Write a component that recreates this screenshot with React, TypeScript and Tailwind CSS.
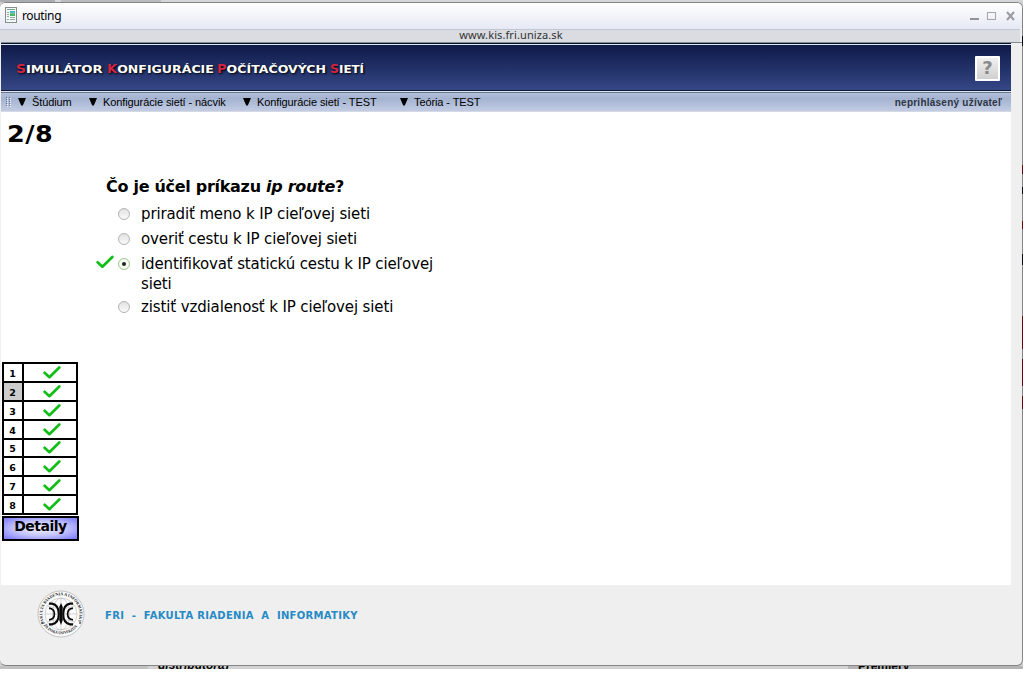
const menu = [
  { label: 'Štúdium', cls: 'w-[71px]' },
  { label: 'Konfigurácie sietí - nácvik', cls: 'w-[154px]' },
  { label: 'Konfigurácie sietí - TEST', cls: 'w-[157px]' },
  { label: 'Teória - TEST', cls: 'w-[100px]' },
];

const titleWords = [
  { first: 'S', rest: 'IMULÁTOR', cls: 'w-[91px]', stretch: 'scale-x-[1.2]' },
  { first: 'K', rest: 'ONFIGURÁCIE', cls: 'w-[110px]', stretch: 'scale-x-[1.14]' },
  { first: 'P', rest: 'OČÍTAČOVÝCH', cls: 'w-[113px]', stretch: 'scale-x-[1.14]' },
  { first: 'S', rest: 'IETÍ', cls: 'w-[40px]', stretch: 'scale-x-[1.08]' },
];

const answers = [
  { text: 'priradiť meno k IP cieľovej sieti', cls: 'h-[25px]', chosen: false },
  { text: 'overiť cestu k IP cieľovej sieti', cls: 'h-[25px]', chosen: false },
  { text: 'identifikovať statickú cestu k IP cieľovej sieti', cls: 'h-[43px]', chosen: true },
  { text: 'zistiť vzdialenosť k IP cieľovej sieti', cls: 'h-[25px]', chosen: false },
];

const rows = [
  'h-[17px] mb-[2px]', 'h-[17px] mb-[2px]', 'h-[17px] mb-[2px]', 'h-[17px] mb-[2px]',
  'h-[16px] mb-[2px]', 'h-[17px] mb-[2px]', 'h-[17px] mb-[2px]', 'h-[17px]',
];

function Check({ className }: { className: string }) {
  return (
    <svg className={className} viewBox="0 0 18 13" fill="none">
      <path d="M1.6 6.8 L6.4 11.2 L16.3 1.5" stroke="#11bd16" strokeWidth="2.7" strokeLinecap="round" strokeLinejoin="round" />
    </svg>
  );
}

function Radio({ on }: { on: boolean }) {
  return (
    <span className={`mt-[4px] flex h-[12px] w-[12px] shrink-0 items-center justify-center rounded-full border ${on ? 'border-[#9ccb8e] bg-[#f5fbf2]' : 'border-[#b3b3b3] bg-gradient-to-b from-[#e2e2e2] to-[#fafafa]'}`}>
      {on && <span className="h-[4px] w-[4px] rounded-full bg-[#202820]" />}
    </span>
  );
}

function Seal() {
  return (
    <svg className="h-[48px] w-[48px]" viewBox="0 0 48 48">
      <defs>
        <path id="sealTop" d="M7.9 33.3 A18.6 18.6 0 1 1 40.1 33.3" />
        <path id="sealBottom" d="M6.5 35.2 A21.6 21.6 0 0 0 41.5 35.2" />
      </defs>
      <circle cx="24" cy="24" r="23" fill="#fbfbfb" stroke="#a0a0a0" strokeWidth=".6" />
      <g fill="none" stroke="#b9b9b9" strokeWidth=".6">
        <circle cx="24" cy="24" r="16" />
        <ellipse cx="24" cy="24" rx="8.5" ry="16" />
        <path d="M8.3 24H39.7M10.5 16Q24 21 37.5 16M10.5 32Q24 27 37.5 32M24 8V40" />
      </g>
      <g fontFamily="Liberation Serif, serif" fontWeight="700" fontSize="4.2" fill="#222">
        <text><textPath href="#sealTop" textLength="76" lengthAdjust="spacingAndGlyphs">FAKULTA RIADENIA A INFORMATIKY</textPath></text>
        <text><textPath href="#sealBottom" textLength="39" lengthAdjust="spacingAndGlyphs">ŽILINSKÁ UNIVERZITA</textPath></text>
      </g>
      <circle cx="5" cy="33" r=".8" />
      <circle cx="43" cy="33" r=".8" />
      <g fill="none" stroke="#0a0a0a">
        <path d="M12 13.6H15Q21.8 15 21.8 24T15 34.4H12M36 13.6H33Q26.2 15 26.2 24T33 34.4H36" strokeWidth="2.1" />
        <path d="M12 18.2Q17.4 18.7 17.4 24T12 29.8M36 18.2Q30.6 18.7 30.6 24T36 29.8" strokeWidth="1.7" />
      </g>
      <path d="M24 13L25.8 17L25.3 23L25.8 30L24 35L22.2 30L22.7 23L22.2 17Z" fill="#0a0a0a" />
    </svg>
  );
}

export default function App() {
  return (
    <div className="relative h-[678px] w-[1028px] overflow-hidden bg-white font-['DejaVu_Sans',sans-serif] text-black">
      <div className="flex h-[669px] w-[1023px] flex-col bg-[#cfcfcf]">
        <div className="flex h-[2px] shrink-0 bg-[#d4d7da]">
          <div className="w-[55px] bg-[#a9acb0]" />
          <div className="ml-[6px] w-[100px] bg-[#b9bcbf]" />
          <div className="ml-[6px] w-[90px] bg-[#d4d7da]" />
        </div>
        <div className="flex h-[664px] shrink-0 flex-col overflow-hidden rounded-[6px] border-t border-r border-b border-[#858585] bg-[#efefef]">
          <div className="flex h-[26px] shrink-0 items-center bg-gradient-to-b from-white to-[#e6e9f4] pl-[5px]">
            <svg className="-mt-[2px] h-[16px] w-[12px]" viewBox="0 0 12 16">
              <rect x=".5" y=".5" width="11" height="15" fill="#f6f8f7" stroke="#868e8b" />
              <path d="M2 2.5H10" stroke="#7ba59c" />
              <path d="M2 5.5H4M2 7.5H4M2 9.5H4M2 12.5H4M5 10.5H10M5 12.5H10" stroke="#92aaa6" />
              <rect x="5" y="4" width="5" height="2.5" fill="#49bac2" />
              <rect x="5" y="6.5" width="5" height="2.5" fill="#4cb85d" />
            </svg>
            <span className="ml-[5px] font-['Noto_Sans'] text-[12px] leading-[16px] tracking-[-0.35px]">routing</span>
            <svg className="mr-[6px] ml-auto h-[12px] w-[46px]" viewBox="0 0 46 12" fill="none">
              <path d="M0 9H9" stroke="#91949b" strokeWidth="2" />
              <rect x="17.5" y="2.5" width="8" height="7" stroke="#a3a5ab" />
              <path d="M37 2L44 10M44 2L37 10" stroke="#999ba1" strokeWidth="2" />
            </svg>
          </div>
          <div className="flex h-[13px] w-[1020px] shrink-0 items-start justify-center border-t border-[#c0c8d2] bg-[#dadce2] pl-[2px] font-['Noto_Sans'] text-[11px] leading-[13px] text-[#333]">
            <span className="-mt-[2px] tracking-[0.1px]">www.kis.fri.uniza.sk</span>
          </div>
          <div className="ml-[1px] h-[1px] shrink-0 bg-[#828998]" />
          <div className="ml-[1px] flex w-[1010px] shrink-0 flex-col">
            <div className="flex h-[49px] items-start border-t border-[#081023] bg-[#dce5fa] pt-[1px]">
              <div className="flex h-[46px] w-full items-center border-b border-[#10172d] bg-gradient-to-b from-[#101a49] to-[#344786]">
                <h1 className="mt-[3px] ml-[15px] flex text-[11.5px] leading-[16px] font-bold text-white [text-shadow:1px_1px_2px_#000]">
                  {titleWords.map((word, i) => (
                    <span key={i} className={word.cls}>
                      <span className={`${word.stretch} inline-block origin-left whitespace-nowrap`}>
                        <span className="text-[#d32543]">{word.first}</span><span className="text-[11px]">{word.rest}</span>
                      </span>
                    </span>
                  ))}
                </h1>
                <button className="mt-[1px] mr-[11px] ml-auto flex h-[25px] w-[25px] items-center justify-center rounded-[1px] border-2 border-white bg-gradient-to-b from-[#f0f0f0] to-[#d0d0d0] text-[18px] leading-none font-bold text-[#8a8a8a]">?</button>
              </div>
            </div>
            <div className="flex h-[19px] items-center border-t border-[#68748b] bg-gradient-to-b from-[#b4c0da] via-[#a4b3d0] via-30% to-[#c2cce3] font-['Liberation_Sans'] text-[11px] leading-[16px]">
              <svg className="mr-[7px] ml-[5px] h-[10px] w-[5px]" viewBox="0 0 5 10">
                <path d="M.5 0V10M3.5 0V10" stroke="#66738f" strokeDasharray="1 1" />
                <path d="M1.5 1V10M4.5 1V10" stroke="#eef3ff" strokeDasharray="1 1" />
              </svg>
              {menu.map((item) => (
                <span key={item.label} className={`${item.cls} flex items-center whitespace-nowrap tracking-[-0.1px]`}>
                  <svg className="mr-[6px] h-[8px] w-[8px]" viewBox="0 0 8 8"><path d="M0 0H8L4.8 7.5H3.2Z" /></svg>
                  {item.label}
                </span>
              ))}
              <span className="mt-[1px] mr-[9px] ml-auto text-[10px] font-bold tracking-[0.24px] text-[#2e3545]">neprihlásený užívateľ</span>
            </div>
            <div className="h-[1px] bg-[#d4d9e4]" />
            <main className="flex h-[473px] flex-col bg-white">
              <h2 className="ml-[6px] h-[64px] pt-[7px] text-[22.5px] leading-[30px] font-bold tracking-[0.5px]"><span className="inline-block origin-left scale-x-[1.13]">2/8</span></h2>
              <section className="ml-[95px] flex h-[186px] flex-col">
                <h3 className="ml-[10px] h-[28px] pt-[1px] text-[16px] leading-[20px] font-bold tracking-[-0.29px]">Čo je účel príkazu <em>ip route</em>?</h3>
                {answers.map((answer) => (
                  <label key={answer.text} className={`${answer.cls} flex text-[15px] leading-[20px] tracking-[-0.13px]`}>
                    <span className="w-[22px]">{answer.chosen && <Check className="mt-[1px] h-[14px] w-[18px]" />}</span>
                    <Radio on={answer.chosen} />
                    <span className="ml-[11px] w-[312px]">{answer.text}</span>
                  </label>
                ))}
              </section>
              <div className="ml-[1px] flex w-[76px] flex-col border-2 border-black bg-black">
                {rows.map((row, i) => (
                  <div key={i} className={`${row} flex gap-[2px]`}>
                    <span className={`flex w-[18px] items-center justify-center pt-[3px] pr-[1px] text-[9.5px] font-bold ${i === 1 ? 'bg-[#cccccc]' : 'bg-white'}`}>{i + 1}</span>
                    <span className="flex flex-1 items-center justify-center bg-white pb-[1px] pl-[3px]"><Check className="h-[13px] w-[18px]" /></span>
                  </div>
                ))}
              </div>
              <button className="mt-[1px] ml-[1px] h-[25px] w-[77px] border-2 border-black bg-[radial-gradient(ellipse_at_center,#f4f4ff_0%,#c4c4ff_50%,#7878fa_100%)] pb-[4px] text-[14px] leading-[17px] font-bold tracking-[-0.5px]">Detaily</button>
            </main>
          </div>
          <footer className="flex h-[77px] shrink-0 pt-[5px] pl-[37px]">
            <Seal />
            <span className="mt-[19px] ml-[20px] text-[10px] leading-[14px] font-bold tracking-[0.3px] whitespace-pre text-[#278ac5]">FRI  -  FAKULTA RIADENIA  A  INFORMATIKY</span>
          </footer>
        </div>
        <div className="flex h-[3px] shrink-0 overflow-hidden bg-[#c1c1c1] font-['Liberation_Sans'] text-[12px] leading-[12px] font-bold">
          <div className="ml-[148px] h-full w-[700px] bg-[#d2d2d2] pl-[10px]"><span className="-mt-[7px] block italic">distributora)</span></div>
          <div className="h-full flex-1 bg-[#b4b4b4] pl-[10px]"><span className="-mt-[6px] block">Premiéry</span></div>
        </div>
      </div>
      <svg className="absolute top-0 left-[1021px] h-[669px] w-[2px]" viewBox="0 0 2 669">
        <path d="M1.5 36V46M1.5 187V194M1.5 254V265" stroke="#080b14" />
        <path d="M1.5 165V174M1.5 221V229M1.5 316V349M1.5 359V386M1.5 396V409" stroke="#680014" />
      </svg>
    </div>
  );
}
